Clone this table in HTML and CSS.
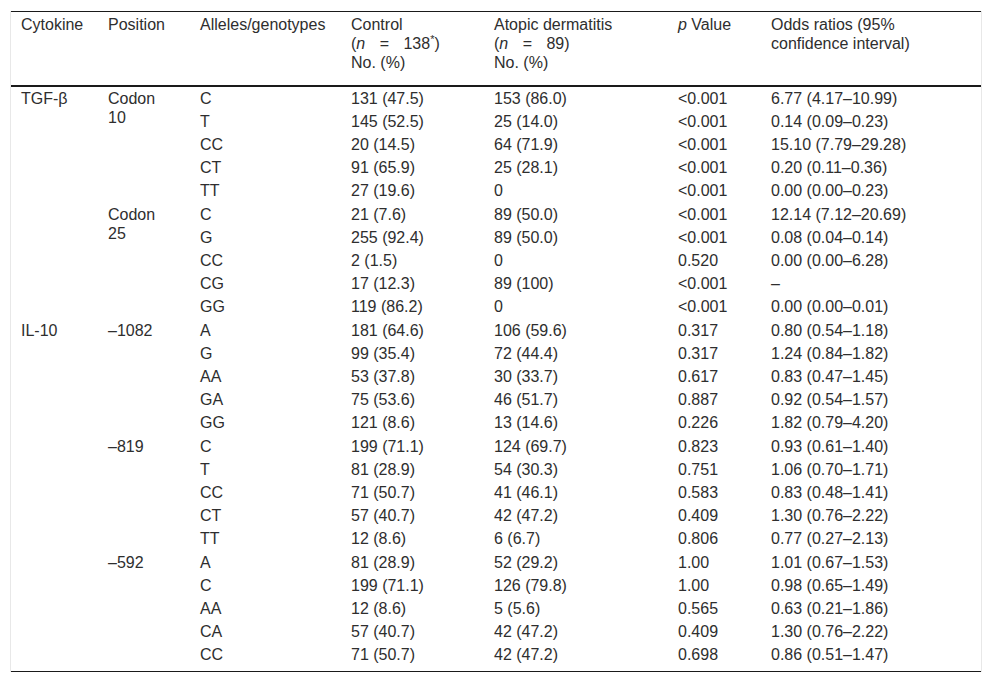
FILE: index.html
```html
<!DOCTYPE html>
<html lang="en">
<head>
<meta charset="utf-8">
<title>Cytokine polymorphisms</title>
<link rel="stylesheet" href="styles.css">
</head>
<body>
<div class="page">
  <div class="frame">
    <table class="data">
      <colgroup>
        <col class="c1"><col class="c2"><col class="c3"><col class="c4"><col class="c5"><col class="c6"><col class="c7">
      </colgroup>
      <thead>
        <tr>
          <th>Cytokine</th>
          <th>Position</th>
          <th>Alleles/genotypes</th>
          <th>Control<br><span class="spread">(<i>n</i> = 138<sup>*</sup>)</span><br>No. (%)</th>
          <th>Atopic dermatitis<br><span class="spread">(<i>n</i> = 89)</span><br>No. (%)</th>
          <th><i>p</i> Value</th>
          <th>Odds ratios (95% confidence interval)</th>
        </tr>
      </thead>
      <tbody>
        <tr><td rowspan="10">TGF-β</td><td rowspan="5">Codon<br>10</td><td>C</td><td>131 (47.5)</td><td>153 (86.0)</td><td>&lt;0.001</td><td>6.77 (4.17–10.99)</td></tr>
        <tr><td>T</td><td>145 (52.5)</td><td>25 (14.0)</td><td>&lt;0.001</td><td>0.14 (0.09–0.23)</td></tr>
        <tr><td>CC</td><td>20 (14.5)</td><td>64 (71.9)</td><td>&lt;0.001</td><td>15.10 (7.79–29.28)</td></tr>
        <tr><td>CT</td><td>91 (65.9)</td><td>25 (28.1)</td><td>&lt;0.001</td><td>0.20 (0.11–0.36)</td></tr>
        <tr><td>TT</td><td>27 (19.6)</td><td>0</td><td>&lt;0.001</td><td>0.00 (0.00–0.23)</td></tr>
        <tr><td rowspan="5">Codon<br>25</td><td>C</td><td>21 (7.6)</td><td>89 (50.0)</td><td>&lt;0.001</td><td>12.14 (7.12–20.69)</td></tr>
        <tr><td>G</td><td>255 (92.4)</td><td>89 (50.0)</td><td>&lt;0.001</td><td>0.08 (0.04–0.14)</td></tr>
        <tr><td>CC</td><td>2 (1.5)</td><td>0</td><td>0.520</td><td>0.00 (0.00–6.28)</td></tr>
        <tr><td>CG</td><td>17 (12.3)</td><td>89 (100)</td><td>&lt;0.001</td><td>–</td></tr>
        <tr><td>GG</td><td>119 (86.2)</td><td>0</td><td>&lt;0.001</td><td>0.00 (0.00–0.01)</td></tr>
        <tr><td rowspan="15">IL-10</td><td rowspan="5">–1082</td><td>A</td><td>181 (64.6)</td><td>106 (59.6)</td><td>0.317</td><td>0.80 (0.54–1.18)</td></tr>
        <tr><td>G</td><td>99 (35.4)</td><td>72 (44.4)</td><td>0.317</td><td>1.24 (0.84–1.82)</td></tr>
        <tr><td>AA</td><td>53 (37.8)</td><td>30 (33.7)</td><td>0.617</td><td>0.83 (0.47–1.45)</td></tr>
        <tr><td>GA</td><td>75 (53.6)</td><td>46 (51.7)</td><td>0.887</td><td>0.92 (0.54–1.57)</td></tr>
        <tr><td>GG</td><td>121 (8.6)</td><td>13 (14.6)</td><td>0.226</td><td>1.82 (0.79–4.20)</td></tr>
        <tr><td rowspan="5">–819</td><td>C</td><td>199 (71.1)</td><td>124 (69.7)</td><td>0.823</td><td>0.93 (0.61–1.40)</td></tr>
        <tr><td>T</td><td>81 (28.9)</td><td>54 (30.3)</td><td>0.751</td><td>1.06 (0.70–1.71)</td></tr>
        <tr><td>CC</td><td>71 (50.7)</td><td>41 (46.1)</td><td>0.583</td><td>0.83 (0.48–1.41)</td></tr>
        <tr><td>CT</td><td>57 (40.7)</td><td>42 (47.2)</td><td>0.409</td><td>1.30 (0.76–2.22)</td></tr>
        <tr><td>TT</td><td>12 (8.6)</td><td>6 (6.7)</td><td>0.806</td><td>0.77 (0.27–2.13)</td></tr>
        <tr><td rowspan="5">–592</td><td>A</td><td>81 (28.9)</td><td>52 (29.2)</td><td>1.00</td><td>1.01 (0.67–1.53)</td></tr>
        <tr><td>C</td><td>199 (71.1)</td><td>126 (79.8)</td><td>1.00</td><td>0.98 (0.65–1.49)</td></tr>
        <tr><td>AA</td><td>12 (8.6)</td><td>5 (5.6)</td><td>0.565</td><td>0.63 (0.21–1.86)</td></tr>
        <tr><td>CA</td><td>57 (40.7)</td><td>42 (47.2)</td><td>0.409</td><td>1.30 (0.76–2.22)</td></tr>
        <tr><td>CC</td><td>71 (50.7)</td><td>42 (47.2)</td><td>0.698</td><td>0.86 (0.51–1.47)</td></tr>
      </tbody>
    </table>
  </div>
</div>
</body>
</html>
```

FILE: styles.css
```css
html, body {
  margin: 0;
  padding: 0;
  background: #ffffff;
}

.page {
  padding: 11px 10px 10px 10px;
}

.frame {
  border-left: 1px solid #e8e8e8;
  border-right: 1px solid #e8e8e8;
}

.data {
  width: 100%;
  table-layout: fixed;
  border-collapse: collapse;
  font-family: "Liberation Sans", Arial, sans-serif;
  font-size: 16px;
  line-height: 19.2px;
  color: #2e2e2e;
  border-top: 1px solid #1a1a1a;
  border-bottom: 1px solid #1a1a1a;
}

.c1 { width: 87px; }
.c2 { width: 92px; }
.c3 { width: 151px; }
.c4 { width: 143px; }
.c5 { width: 184px; }
.c6 { width: 93px; }
.c7 { width: 220px; }

.data th {
  font-weight: normal;
  text-align: left;
  vertical-align: top;
  padding: 3px 6px 12px 10px;
  border-bottom: 2px solid #1a1a1a;
}

.data td {
  text-align: left;
  vertical-align: top;
  padding: 2px 6px 2px 10px;
  white-space: nowrap;
}

.data tbody tr:last-child td {
  padding-bottom: 6px;
}

.spread {
  word-spacing: 10px;
}

.data sup {
  font-size: 11px;
  line-height: 0;
  vertical-align: 6px;
}
```
